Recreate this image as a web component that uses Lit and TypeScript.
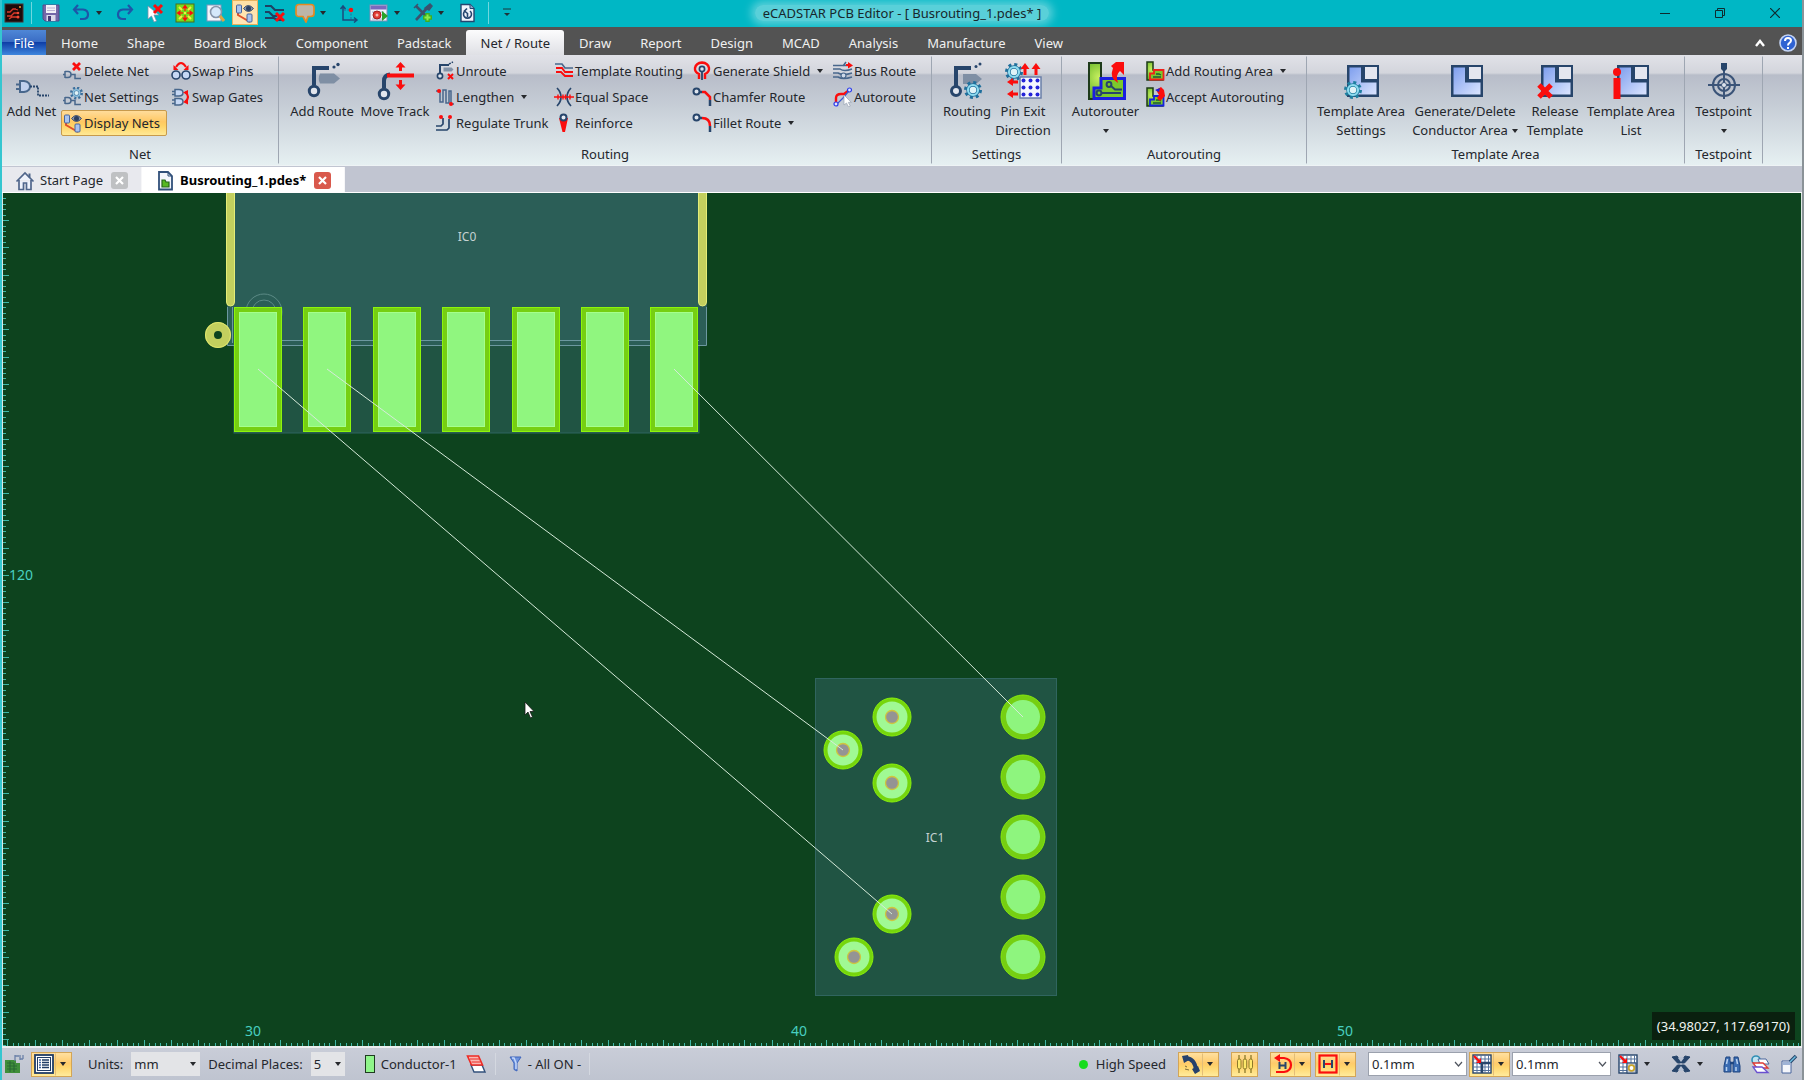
import { LitElement, html, svg, css, nothing, TemplateResult } from "lit";
import { customElement } from "lit/decorators.js";
import { classMap } from "lit/directives/class-map.js";

const NAVY = "#27456b";
const RED = "#fb0d0d";

const gear = (cx: number, cy: number, r: number, stroke = "#1f6f9c", fill = "#8fdcf0") => svg`
  <circle cx=${cx} cy=${cy} r=${r} fill="none" stroke=${stroke} stroke-width="4" stroke-dasharray=${`${(r * 0.4).toFixed(2)} ${(r * 0.385).toFixed(2)}`}/>
  <circle cx=${cx} cy=${cy} r=${r * 0.72} fill="#dff3f8" stroke=${stroke} stroke-width=${r * 0.5}/>
  <circle cx=${cx} cy=${cy} r=${r * 0.72} fill="none" stroke=${fill} stroke-width=${r * 0.3}/>`;

const cross = (x: number, y: number, s: number, w: number) => svg`
  <path d=${`M${x} ${y}l${s} ${s}M${x + s} ${y}l${-s} ${s}`} stroke=${RED} stroke-width=${w} fill="none"/>`;

const netLine = svg`
  <path d="M2 10v7M2 10.500h3q3 0 3 3t-3 3H2M0 13.500h2M8 13.500h4v4h6" fill="none" stroke="#48678c" stroke-width="1.500"/>`;

const displayNets = svg`
  <path d="M3 9v3l12 7" fill="none" stroke="#e0502a" stroke-width="2"/>
  <rect x="1.500" y="2" width="5" height="8" rx="1" fill="#a9c3ee" stroke="#48659c"/>
  <rect x="12" y="11" width="5" height="8" rx="1" fill="#a9c3ee" stroke="#48659c"/>
  <path d="M8.500 5.500q4.500-6 10 0q-5 6-10 0z" fill="#8b97ab" stroke="#3d4e6b"/>
  <circle cx="13.500" cy="5.500" r="2.500" fill="#2c3f62"/>`;

const board = (stroke: string) => svg`
  <path d="M2 1h6v8h10v10H2z" fill="url(#boardFill)" stroke="#1d3b16" stroke-width="1.500"/>
  <path d="M5 18.500v-6h4V9h9.500v9.500z" fill="#7cc92c" stroke=${stroke} stroke-width="1.800"/>
  <path d="M8 16h8M11 13h3l2 1" stroke="#1d5a36" stroke-width="1.300" fill="none"/>`;

const template = svg`
  <rect x="6" y="4" width="32" height="32" fill=${NAVY}/>
  <path d="M8.500 6.500h11.500v15h15.500v12H8.500z" fill="url(#tplFill)"/>
  <rect x="24" y="6" width="12" height="12" fill="#e4e6ef"/>`;

const defs = svg`
  <defs>
    <linearGradient id="tplFill" x1="0" y1="0" x2="1" y2="1">
      <stop offset="0" stop-color="#7f9fee"/><stop offset="1" stop-color="#dbe5ff"/>
    </linearGradient>
    <radialGradient id="boardFill" cx=".3" cy=".4" r=".8">
      <stop offset="0" stop-color="#c9f060"/><stop offset="1" stop-color="#3d9d12"/>
    </radialGradient>
  </defs>`;

/* Glyphs drawn on a 20 by 20 grid. */
const SMALL: Record<string, TemplateResult> = {
  deleteNet: svg`${netLine}${cross(10, 2, 7, 2.8)}`,
  netSettings: svg`${netLine}${gear(13.500, 6, 4.500, "#3b6f9c", "#8fc4e0")}`,
  displayNets,
  swapPins: svg`
    <circle cx="5" cy="14" r="4" fill="#c6d8f4" stroke=${NAVY} stroke-width="1.600"/>
    <circle cx="15" cy="14" r="4" fill="#c6d8f4" stroke=${NAVY} stroke-width="1.600"/>
    <path d="M5 6q5-8 10 0" fill="none" stroke=${RED} stroke-width="2"/>
    <path d="M2.500 4v5h5zM17.500 4v5h-5z" fill=${RED}/>`,
  swapGates: svg`
    <path d="M4 2.500h4q4 0 4 3.200t-4 3.200H4zM4 11.500h4q4 0 4 3.200t-4 3.200H4zM1 4.500h3M1 7.500h3M1 13h3M1 16.500h3" fill="#c6d8f4" stroke="#48678c" stroke-width="1.500"/>
    <path d="M14 5q6 5 0 10" fill="none" stroke=${RED} stroke-width="2.200"/>
    <path d="M12 5.500l5-2.500v5zM12 15l5 2.500v-5z" fill=${RED}/>`,
  unroute: svg`
    <path d="M5 13V4h9" fill="none" stroke=${NAVY} stroke-width="2"/>
    <path d="M14 3l4-2" stroke=${NAVY} stroke-width="1.500" stroke-dasharray="2 1"/>
    <circle cx="5" cy="15" r="2.600" fill="#dfe5ee" stroke=${NAVY} stroke-width="1.600"/>
    <path d="M8.500 6.500h8l2 2-2 2h-8z" fill="#8393a8"/>${cross(13, 13, 5, 2)}`,
  lengthen: svg`
    <path d="M1 4h4v11h3V3h3v13h3V4h2v13h3" fill="none" stroke="#48678c" stroke-width="1.500"/>
    <circle cx="4" cy="4" r="2" fill=${RED}/><circle cx="16" cy="17" r="2" fill=${RED}/>`,
  regulateTrunk: svg`
    <path d="M1 13h5l2-2V5M1 17h11l2-2V6" fill="none" stroke=${NAVY} stroke-width="1.700"/>
    <circle cx="6" cy="4" r="2" fill=${RED}/><circle cx="15" cy="4" r="2" fill=${RED}/>`,
  templateRouting: svg`
    <path d="M1 3h7l3 4h8" fill="none" stroke="#48678c" stroke-width="1.700"/>
    <path d="M2 7h6l3 4h8M2 11h5l4 4h8" fill="none" stroke=${RED} stroke-width="1.800"/>`,
  equalSpace: svg`
    <path d="M3 1q4 4 4 9t-4 9M17 1q-4 4-4 9t4 9" fill="none" stroke=${NAVY} stroke-width="1.700"/>
    <path d="M0 10h20M4 7.500v5M9 7.500v5M11.500 7.500v5M16 7.500v5" stroke=${RED} stroke-width="1.400"/>`,
  reinforce: svg`
    <path d="M5 5h9l-3 14H8.500z" fill=${RED}/>
    <circle cx="9.500" cy="4.500" r="3" fill="#e6ebf3" stroke=${NAVY} stroke-width="2"/>`,
  generateShield: svg`
    <path d="M7 18v-5q-4.500-2-4-6 1-5 7-5.500 6 .5 7 5.500.5 4-4 6v5" fill="none" stroke=${RED} stroke-width="2.400"/>
    <path d="M10 10v9" stroke=${NAVY} stroke-width="1.800"/>
    <circle cx="10" cy="8" r="2.600" fill="#dfe5ee" stroke=${NAVY} stroke-width="1.700"/>`,
  chamferRoute: svg`
    <circle cx="4.500" cy="4.500" r="3" fill="#dfe5ee" stroke=${NAVY} stroke-width="2"/>
    <path d="M7 5h3M18 13v6" stroke=${NAVY} stroke-width="2.500"/>
    <path d="M10 5h3l5 5v3" fill="none" stroke=${RED} stroke-width="2.500"/>`,
  filletRoute: svg`
    <circle cx="4.500" cy="4.500" r="3" fill="#dfe5ee" stroke=${NAVY} stroke-width="2"/>
    <path d="M7 5h3M18 13v6" stroke=${NAVY} stroke-width="2.500"/>
    <path d="M10 5q8 0 8 8" fill="none" stroke=${RED} stroke-width="2.500"/>`,
  busRoute: svg`
    <path d="M0 4.500h18M0 8h7q4 3 12 0M0 12h5q5 3 14 0M0 16h5q5 3 14 0M10 5l3-4" fill="none" stroke="#48678c" stroke-width="1.500"/>
    <path d="M13 4h3" stroke=${RED} stroke-width="2"/><path d="M15 1l5 3.500-5 3z" fill=${RED}/>
    <circle cx="10.500" cy="14.500" r="2.500" fill="#cfd9e8" stroke="#48678c" stroke-width="1.200"/>`,
  autoroute: svg`
    <path d="M3 16v-5q0-4 5-4h3l4-3" fill="none" stroke=${RED} stroke-width="2.400"/>
    <path d="M4 17l6-6 5-6" fill="none" stroke="#3a5bd0" stroke-width="1.200"/>
    <circle cx="16.500" cy="3" r="2" fill="#dfe5ff" stroke="#2b3bea" stroke-width="1.200"/>
    <circle cx="3" cy="17" r="2" fill="#dfe5ff" stroke="#2b3bea" stroke-width="1.200"/>
    <path d="M11 8v10l2.500-2 2 4 1.800-1-2-3.600h3z" fill="#fff" stroke="#9aa3b5" stroke-width=".7"/>`,
  addRoutingArea: svg`${defs}${board("#f0201a")}`,
  acceptAutorouting: svg`${defs}${board("#1522e0")}<path d="M11 3l5-3 3 3 1 6-5 5-3-3 2-3z" fill=${RED}/><path d="M10 3l5-2-1 4z" fill="#1522e0"/>`,

  appLogo: svg`
    <rect x="1" y="1" width="18" height="18" fill="#1c0b0a" stroke="#493230"/>
    <path d="M3 13h4l3-3h5M3 9h3l3-3h3M5 16l3-2h6M11 6l3 1" fill="none" stroke="#d8392a" stroke-width="1.300"/>
    <circle cx="14" cy="14" r="1.500" fill="#f04a35"/><circle cx="14" cy="10" r="1.300" fill="#f04a35"/><circle cx="16" cy="4" r="1" fill="#f4a035"/>`,
  save: svg`
    <path d="M2 2h16v16H4l-2-2z" fill="#7467a8" stroke="#574a8a"/>
    <rect x="5" y="2" width="10" height="8" fill="#f2f1f7"/><path d="M6 5h8M6 7.500h8" stroke="#bbb4d4"/>
    <rect x="5.500" y="12" width="9" height="6" fill="#dcd9ea"/><rect x="7" y="13" width="3" height="5" fill="#463a78"/>`,
  undo: svg`<path d="M7 2L3 6.500 7 11M3 6.500h9q5 .5 5 5t-5 4.500H9" fill="none" stroke="#1d56a8" stroke-width="2.200"/>`,
  redo: svg`<path d="M13 2l4 4.500-4 4.500M17 6.500H8q-5 .5-5 5T8 16h3" fill="none" stroke="#1d56a8" stroke-width="2.200"/>`,
  cursorX: svg`<path d="M3 3v13l3.500-3 2.500 6 2.500-1-2.500-6h5z" fill="#fff" stroke="#7d8fa8" stroke-width=".8"/>${cross(9, 2, 8, 3)}`,
  fit: svg`
    <rect x="1" y="1" width="18" height="18" fill="#79dc1c" stroke="#4c6d1d"/>
    <path d="M10 1.500l3 4H7zM10 18.500l3-4H7zM1.500 10l4-3v6zM18.500 10l-4-3v6z" fill=${RED}/>
    <path d="M4 4l3 3M16 4l-3 3M4 16l3-3M16 16l-3-3" stroke="#f4ee3d" stroke-width="2"/>
    <path d="M10 5v3M10 12v3M5 10h3M12 10h3" stroke="#e83a0a" stroke-width="1.600"/>
    <rect x="9" y="9" width="2" height="2" fill="#f4ee3d"/>`,
  magnify: svg`
    <rect x="2" y="2" width="14" height="16" fill="#f2f5fa" stroke="#7d96bb"/>
    <circle cx="11" cy="9" r="5.500" fill="#d5e8fa" stroke="#8795aa" stroke-width="1.600"/>
    <path d="M15 13l4 5" stroke="#d9a545" stroke-width="3"/>`,
  routeX: svg`
    <path d="M0 3h6l4 4h9M0 9h4l4 4h4M0 15h9l3 2h7" fill="none" stroke="#1e4163" stroke-width="2.200"/>${cross(11, 10, 8, 3)}`,
  comment: svg`<path d="M4 1.500h12q3 0 3 3v6q0 3-3 3h-3l-2 5.500-3-5.500H4q-3 0-3-3v-6q0-3 3-3z" fill="#bdb5a8" stroke="#e58a22" stroke-width="1.700"/>`,
  axis: svg`
    <path d="M4 3v14h14M1.500 6L4 3l2.500 3M15 14.500l3 2.500-3 2.500" fill="none" stroke="#1c4a7c" stroke-width="1.500"/>
    <path d="M5 7h7v10" fill="none" stroke="#2f62a0" stroke-dasharray="2 1.500"/><circle cx="12" cy="7" r="2.200" fill=${RED}/>`,
  macro: svg`
    <rect x="1" y="2" width="17" height="16" fill="#f1f3fa" stroke="#7d8bb5"/><rect x="1.500" y="2.500" width="16" height="4" fill="#7b68bd"/>
    <path d="M3 9h12M3 16h12" stroke="#a7aecb"/><circle cx="8" cy="12" r="4" fill="#e23d35" stroke="#a51f1f"/><circle cx="8" cy="12" r="1.500" fill="#f7bbb5"/>
    <path d="M13 8l6 5-6 5z" fill="#2aa32a"/>`,
  tools: svg`
    <path d="M3 17L15 4M3 3l12 12" stroke="#3b526e" stroke-width="2.600"/>
    <path d="M12 5l5-4 2 2-3 4zM1 5l4-4" fill="#3b526e" stroke="#3b526e" stroke-width="1.500"/>
    <path d="M14.500 10v9M10 14.500h9" stroke="#3fae1f" stroke-width="4.500"/><path d="M14.500 11.500v6M11.500 14.500h6" stroke="#8bec4b" stroke-width="2"/>`,
  docRefresh: svg`
    <path d="M4 1.500h9l4 4v13H4z" fill="#eef3fb" stroke="#24456f" stroke-width="1.400"/><path d="M13 1.500v4h4" fill="#8fa8cc" stroke="#24456f"/>
    <path d="M8 8a4 4 0 1 0 5 0M10 5.500L7.500 8l3 2.500M10.500 10v4" fill="none" stroke="#24456f" stroke-width="1.600"/>`,

  house: svg`
    <path d="M1.500 10.500L10 2l8.500 8.500M4 9v9.500h4.500V12h3v6.500H16V9" fill="#eef2fb" stroke="#50668b" stroke-width="1.700"/><path d="M14.500 2.500v4" stroke="#50668b" stroke-width="2"/>`,
  docBoard: svg`
    <path d="M4 1h9l4 4v13.500H4z" fill="#f3f6fc" stroke="#31507a" stroke-width="1.800"/><path d="M13 1v4h4" fill="none" stroke="#31507a"/>
    <path d="M7 9h3l1 2h3v5H7z" fill="#57b822" stroke="#26661c" stroke-width="1.200"/>`,

  boardTag: svg`
    <path d="M1 6h11v3h4v10H1z" fill="#3f8e3a"/><path d="M3 9h7M3 12h10M3 15h10M6 7v11M10 9v9" stroke="#2a6a35" stroke-width="1.200"/>
    <path d="M11 1v6M11 2h4M16 1v5M16 5h3M19 1v4" stroke="#6b80a8" stroke-width="1.300"/>`,
  list: svg`
    <rect x="1" y="1" width="18" height="18" fill="#fff" stroke="#203c66" stroke-width="1.800"/>
    <rect x="3.500" y="3.500" width="13" height="13" fill="none" stroke="#203c66" stroke-width="1"/>
    <path d="M8 6h7M8 8.500h7M8 11h7M8 13.500h7" stroke="#203c66" stroke-width="1.400"/><path d="M5 6h2M5 8.500h2M5 11h2M5 13.500h2" stroke="#3c62a0" stroke-width="1.400"/>`,
  layerPair: svg`
    <path d="M5 11h11l3 7H8z" fill="#fff" stroke="#33517c" stroke-width="1.400"/>
    <path d="M1.500 2h11l4 9h-11z" fill="#f9b7b3" stroke="#ee2b25" stroke-width="1.600"/><path d="M4 5h9M5.500 8h9" stroke="#ee2b25"/>`,
  funnel: svg`<path d="M5 3h11l-4 6v8l-3-1.500V9z" fill="#6e93dc" stroke="#3d65bd"/><path d="M7 4h2l2 5v6" fill="none" stroke="#c5d8fa" stroke-width="1.500"/>`,
  handset: svg`<path d="M5 4q9 1 10 12" fill="none" stroke="#26416b" stroke-width="4"/>
    <path d="M1 2l6-1 1 5-5 3zM11 15l6-3 2 5-5 3z" fill="#26416b"/><path d="M4 12l2 1M4 15l4 1" stroke="#7c6a3a"/>`,
  capsules: svg`
    <path d="M4 1v18M10 1v18M16 1v18" stroke="#8d7a2b" stroke-width="1.300"/>
    <rect x="2.500" y="5" width="3.500" height="10" rx="1.700" fill="#ffe96b" stroke="#8d7a2b"/><rect x="8.200" y="5" width="3.500" height="10" rx="1.700" fill="#ffe96b" stroke="#8d7a2b"/><rect x="14" y="5" width="3.500" height="10" rx="1.700" fill="#ffe96b" stroke="#8d7a2b"/>`,
  loopH: svg`
    <path d="M4 4h7q7 1 7 7t-7 7H3" fill="none" stroke=${RED} stroke-width="2.200"/><path d="M7 0v8L1 4z" fill=${RED}/>
    <path d="M6.500 8v7M12.500 8v7M6.500 11.500h6" stroke="#27456b" stroke-width="2"/>`,
  boxH: svg`
    <rect x="1.500" y="1.500" width="17" height="17" fill="none" stroke=${RED} stroke-width="2.200"/>
    <path d="M6 6v8M14 6v8" stroke="#27456b" stroke-width="2"/><path d="M7 10h6" stroke=${RED} stroke-width="2"/>`,
  gridArrow: svg`
    <rect x="1" y="1" width="18" height="18" fill="#fff" stroke="#27456b" stroke-width="1.400"/>
    <path d="M1 5h18M1 9h18M1 13h18M1 16.500h18M5 1v18M9 1v18M13 1v18M16.500 1v18" stroke="#55729c"/><path d="M10 9v10M7 9h12" stroke="#27456b" stroke-width="2.400"/>
    <path d="M2 2l5 5" stroke=${RED} stroke-width="2.200"/><path d="M9 4v5H4z" fill=${RED}/>`,
  gridVia: svg`
    <rect x="1" y="1" width="18" height="18" fill="#fff" stroke="#27456b" stroke-width="1.400"/>
    <path d="M1 5h18M1 9h18M1 13h18M1 16.500h18M5 1v18M9 1v18M13 1v18M16.500 1v18" stroke="#55729c"/>
    <rect x="9" y="9" width="9" height="10" fill="#c3cad8" stroke="#27456b"/><circle cx="13.500" cy="14" r="2.800" fill="#fff" stroke="#c9a52b" stroke-width="1.800"/>
    <path d="M2 2l5 5" stroke=${RED} stroke-width="2.200"/><path d="M9 4v5H4z" fill=${RED}/>`,
  target: svg`
    <path d="M1 3l5-1 3.500 5v2h-3zM19 3l-5-1-3.500 5v2h3zM1 17l5 1 3.500-5v-2h-3zM19 17l-5 1-3.500-5v-2h3z" fill="#27456b" stroke="#27456b"/>
    <path d="M7 4q3-2 6 0l-3 4zM7 16q3 2 6 0l-3-4z" fill="#b9c3d4"/>`,
  binoculars: svg`
    <path d="M4 3h4v4l1 3v8H2v-6zM12 3h4l2 9v6h-7v-8l1-3z" fill="#3b6cb2" stroke="#1e4580"/>
    <path d="M8 9h4" stroke="#1e4580" stroke-width="2.500"/><path d="M4.500 13v4M14 13v4M5.500 5l-1 5M14.500 5l1 5" stroke="#b9d2f2" stroke-width="1.500"/>`,
  layers: svg`
    <circle cx="6" cy="6" r="4" fill="#bfe3f0" stroke="#2f8fb5" stroke-width="1.600"/>
    <path d="M8 5h8l3 5h-9z" fill="#fff" stroke="#48659c"/><path d="M3 9h10l5 5H7z" fill="#fff" stroke="#e03a35" stroke-width="1.300"/>
    <path d="M3 13h9l6 5.500H7z" fill="#fff" stroke="#6a50d0" stroke-width="1.300"/>`,
  brush: svg`
    <path d="M4 7h9v12H4z" fill="#f4f6fb" stroke="#48659c"/><path d="M5 8h7v3H5z" fill="#9fb3d6"/><path d="M12 8l6-6" stroke="#27456b" stroke-width="3.500"/><path d="M12 8l5.500-5.500" stroke="#6fc1e4" stroke-width="1.500"/>`,
};

/* Glyphs drawn on a 40 by 40 grid. */
const LARGE: Record<string, TemplateResult> = {
  addNet: svg`
    <path d="M8 20v11h4q6-1 6-5.500T12 20zM4 23.500h4M4 28h4" fill="#bfd0ee" stroke="#48678c" stroke-width="2"/>
    <path d="M18 25.500h8v9h11" fill="none" stroke="#27456b" stroke-width="1.800" stroke-dasharray="2 1"/>`,
  addRoute: svg`
    <path d="M12 24V7h15" fill="none" stroke=${NAVY} stroke-width="4"/>
    <circle cx="12" cy="30" r="4.700" fill="#e2e6ee" stroke=${NAVY} stroke-width="3"/>
    <circle cx="32" cy="6" r="1.600" fill=${NAVY}/><circle cx="36" cy="3.500" r="1.700" fill=${NAVY}/>
    <path d="M18 12.500h14l6 5-6 5H18q-2.500-5 0-10z" fill="#7f8fa4"/>`,
  moveTrack: svg`
    <path d="M9 27v-7q0-6 6-6.500" fill="none" stroke=${NAVY} stroke-width="4"/>
    <circle cx="9" cy="33" r="4.700" fill="#e2e6ee" stroke=${NAVY} stroke-width="3"/>
    <path d="M12 14.500h27" stroke=${RED} stroke-width="4"/>
    <path d="M25.500 1l5 5.500h-3.500V10h-3V6.500h-3.500zM25.500 29l5-5.500h-3.500V19h-3v4.500h-3.500z" fill=${RED}/>`,
  routing: svg`
    <path d="M9 25V7h15" fill="none" stroke=${NAVY} stroke-width="4"/>
    <circle cx="9" cy="30" r="4.500" fill="#e2e6ee" stroke=${NAVY} stroke-width="3"/>
    <circle cx="29" cy="5.500" r="1.500" fill=${NAVY}/><circle cx="33" cy="3" r="1.500" fill=${NAVY}/>
    <path d="M16 13h13l6 5-6 5H16z" fill="#7f8fa4"/>${gear(26, 29, 7)}`,
  pinExit: svg`
    ${gear(11, 11, 7)}
    <path d="M22 2l4.500 6h-3v6h-3V8h-3zM33 2l4.500 6h-3v6h-3V8h-3zM4 21l6-4v2.500h5v3h-5V25zM4 33l6-4v2.500h5v3h-5V37z" fill=${RED}/>
    <rect x="17" y="16" width="21" height="21" fill="#f4f6ff" stroke="#6a7fa8" stroke-width="1.500"/>
    ${[20.5, 27.5, 34.5].map((x) => [19.5, 26.5, 33.5].map((y) => svg`<circle cx=${x} cy=${y} r="2" fill="#2222d8"/>`))}`,
  autorouter: svg`${defs}
    <path d="M3 2h12v16h22v20H3z" fill="url(#boardFill)" stroke="#1e3a1a" stroke-width="2"/>
    <path d="M8 37.500V27h7v-9.500h23.500v20z" fill="#7cc92c" stroke="#1a1fe0" stroke-width="3"/>
    <circle cx="13" cy="32" r="2.400" fill="none" stroke=${NAVY} stroke-width="2"/><circle cx="23" cy="23.500" r="2.400" fill="none" stroke=${NAVY} stroke-width="2"/>
    <path d="M16 32h19M25 25l4 3.500h7" fill="none" stroke=${NAVY} stroke-width="2"/>
    <path d="M30 1h8v13l-4-4q-5 4-2 12-9-5-5-15l-2-2z" fill=${RED}/>`,
  templateSettings: svg`${defs}${template}${gear(12, 29, 7, "#1f7fa0")}`,
  template: svg`${defs}${template}`,
  templateRelease: svg`${defs}${template}${cross(4, 24, 12, 5)}`,
  templateList: svg`${defs}${template}<circle cx="6" cy="11" r="4" fill=${RED}/><rect x="2.500" y="17" width="7" height="21" fill=${RED}/>`,
  testpoint: svg`
    <path d="M17 2h6v6l-2 2v3h-2v-3l-2-2z" fill=${NAVY}/>
    <circle cx="20" cy="24" r="11" fill="none" stroke="#3b5478" stroke-width="2"/><circle cx="20" cy="24" r="6" fill="none" stroke="#3b5478" stroke-width="2"/>
    <path d="M20 10v28M4 24h32" stroke="#3b5478" stroke-width="2"/><circle cx="20" cy="24" r="2.500" fill="#dfe5ee" stroke="#3b5478"/>`,
};

const smallIcon = (name: string) => html`<svg class="icon" width="20" height="20" viewBox="0 0 20 20" aria-hidden="true">${SMALL[name]}</svg>`;
const largeIcon = (name: string) => html`<svg class="icon" width="40" height="40" viewBox="0 0 40 40" aria-hidden="true">${LARGE[name]}</svg>`;
const caret = html`<svg class="caret" width="6" height="4" viewBox="0 0 6 4" aria-hidden="true"><path d="M0 0h6L3 4z" fill="#26282c"/></svg>`;

const base = css`
  :host, * { box-sizing: border-box; }
  :host { font: 13px/19px "Noto Sans", "Open Sans", sans-serif; color: #24272d; }
  button, select { font: inherit; color: inherit; }
  button { border: 1px solid transparent; background: none; padding: 0; margin: 0; white-space: nowrap; }
  .icon, .caret { display: block; flex: none; }
`;

@customElement("title-bar")
class TitleBar extends LitElement {
  static styles = [base, css`
    :host { display: grid; grid-template-columns: 1fr auto 1fr; align-items: center; height: 27px; padding-bottom: 2px; background: #00b7c5; color: #17272c; }
    .quick { display: flex; align-items: center; }
    .tool { display: grid; place-items: center; width: 26px; height: 25px; margin-right: 4px; }
    .tool.drop { margin-right: 0; }
    .tool.on { border-color: #e8b35e; background: linear-gradient(#ffe0a6, #ffe7b8); }
    .more { display: grid; place-items: center; width: 10px; height: 25px; margin-right: 8px; }
    .logo { margin: 0 7px 0 2px; }
    .bar { width: 1px; height: 22px; background: #6fd7de; margin-right: 6px; }
    .bar.end { margin: 0 12px 0 4px; }
    .title { padding: 0 8px; border-radius: 8px; background: #ffffff59; box-shadow: 0 0 8px 4px #ffffff59; line-height: 16px; }
    .window { display: flex; justify-content: flex-end; }
    .window button { display: grid; place-items: center; width: 55px; height: 25px; }
  `];
  tool(icon: string, label: string, drop = false, on = false) {
    return html`<button class=${classMap({ tool: true, drop, on })} aria-label=${label}>${smallIcon(icon)}</button>
      ${drop ? html`<button class="more" aria-label="${label} options">${caret}</button>` : nothing}`;
  }
  render() {
    return html`
      <div class="quick">
        <div class="logo">${smallIcon("appLogo")}</div>
        <div class="bar"></div>
        ${this.tool("save", "Save")}
        ${this.tool("undo", "Undo", true)}
        ${this.tool("redo", "Redo")}
        ${this.tool("cursorX", "Clear selection")}
        ${this.tool("fit", "Fit view")}
        ${this.tool("magnify", "Zoom")}
        ${this.tool("displayNets", "Display nets", false, true)}
        ${this.tool("routeX", "Remove route")}
        ${this.tool("comment", "Comment", true)}
        ${this.tool("axis", "Origin")}
        ${this.tool("macro", "Macro", true)}
        ${this.tool("tools", "Tools", true)}
        ${this.tool("docRefresh", "Reload")}
        <div class="bar end"></div>
        <button class="more" aria-label="Customise toolbar">
          <svg class="icon" width="10" height="10" viewBox="0 0 10 10"><path d="M1 1h8" stroke="#1d3338"/><path d="M2 5h6L5 8z" fill="#1d3338"/></svg>
        </button>
      </div>
      <div class="title">eCADSTAR PCB Editor - [ Busrouting_1.pdes* ]</div>
      <div class="window">
        <button aria-label="Minimise"><svg width="10" height="10"><path d="M0 5.500h10" stroke="#0e2a2e"/></svg></button>
        <button aria-label="Restore"><svg width="10" height="10"><path d="M.5 2.500h7v7h-7zM2.500 2.500v-2h7v7h-2" fill="none" stroke="#0e2a2e"/></svg></button>
        <button aria-label="Close"><svg width="10" height="10"><path d="M0 0l10 10M10 0L0 10" stroke="#0e2a2e" stroke-width="1.200"/></svg></button>
      </div>`;
  }
}

@customElement("menu-bar")
class MenuBar extends LitElement {
  static styles = [base, css`
    :host { display: flex; align-items: flex-end; height: 28px; background: #535353; color: #f0f0f0; }
    button { height: 25px; padding: 2px 14px 0 15px; border: 0; }
    .file { width: 44px; padding: 2px 0 0; background: linear-gradient(#4f87d6, #3a6cc4 48%, #0f3fa8 50%, #3f86dd); color: #fff; }
    .on { color: #24272d; border-radius: 3px 3px 0 0; background: linear-gradient(#fcfcfd, #dfe0e5); }
    .spacer { flex: 1; }
    .help { padding: 0; width: 28px; display: grid; place-items: center; }
  `];
  render() {
    const tabs = ["Home", "Shape", "Board Block", "Component", "Padstack", "Net / Route", "Draw", "Report", "Design", "MCAD", "Analysis", "Manufacture", "View"];
    return html`
      <button class="file">File</button>
      ${tabs.map((t) => html`<button class=${classMap({ on: t === "Net / Route" })}>${t}</button>`)}
      <div class="spacer"></div>
      <button class="help" aria-label="Collapse ribbon"><svg width="10" height="8"><path d="M1 7l4-5 4 5" fill="none" stroke="#fff" stroke-width="2.400"/></svg></button>
      <button class="help" aria-label="Help">
        <svg width="20" height="20"><circle cx="10" cy="10" r="8" fill="#2f62d2" stroke="#c3d3f3" stroke-width="1.600"/>
          <path d="M7 8q0-3 3-3t3 2.500q0 1.500-1.500 2.300T10 12.500M10 14v2" fill="none" stroke="#fff" stroke-width="2"/></svg>
      </button>`;
  }
}

type Small = { icon: string; label: string; drop?: boolean; on?: boolean };
type Big = { icon: string; lines: string[]; drop?: boolean };
type Group = { id: string; caption: string; big: Big[]; columns: Small[][] };

const GROUPS: Group[] = [
  { id: "net", caption: "Net", big: [{ icon: "addNet", lines: ["Add Net"] }], columns: [
    [{ icon: "deleteNet", label: "Delete Net" }, { icon: "netSettings", label: "Net Settings" }, { icon: "displayNets", label: "Display Nets", on: true }],
    [{ icon: "swapPins", label: "Swap Pins" }, { icon: "swapGates", label: "Swap Gates" }]] },
  { id: "routing", caption: "Routing", big: [{ icon: "addRoute", lines: ["Add Route"] }, { icon: "moveTrack", lines: ["Move Track"] }], columns: [
    [{ icon: "unroute", label: "Unroute" }, { icon: "lengthen", label: "Lengthen", drop: true }, { icon: "regulateTrunk", label: "Regulate Trunk" }],
    [{ icon: "templateRouting", label: "Template Routing" }, { icon: "equalSpace", label: "Equal Space" }, { icon: "reinforce", label: "Reinforce" }],
    [{ icon: "generateShield", label: "Generate Shield", drop: true }, { icon: "chamferRoute", label: "Chamfer Route" }, { icon: "filletRoute", label: "Fillet Route", drop: true }],
    [{ icon: "busRoute", label: "Bus Route" }, { icon: "autoroute", label: "Autoroute" }]] },
  { id: "settings", caption: "Settings", big: [{ icon: "routing", lines: ["Routing"] }, { icon: "pinExit", lines: ["Pin Exit", "Direction"] }], columns: [] },
  { id: "autorouting", caption: "Autorouting", big: [{ icon: "autorouter", lines: ["Autorouter", ""], drop: true }], columns: [
    [{ icon: "addRoutingArea", label: "Add Routing Area", drop: true }, { icon: "acceptAutorouting", label: "Accept Autorouting" }]] },
  { id: "template", caption: "Template Area", big: [
    { icon: "templateSettings", lines: ["Template Area", "Settings"] }, { icon: "template", lines: ["Generate/Delete", "Conductor Area"], drop: true },
    { icon: "templateRelease", lines: ["Release", "Template"] }, { icon: "templateList", lines: ["Template Area", "List"] }], columns: [] },
  { id: "testpoint", caption: "Testpoint", big: [{ icon: "testpoint", lines: ["Testpoint", ""], drop: true }], columns: [] },
];

@customElement("ribbon-panel")
class RibbonPanel extends LitElement {
  static styles = [base, css`
    :host { display: flex; height: 111px; background: linear-gradient(#e1e2e8, #d3d5dc 18px, #b8bdc9 20px, #c6cdd6 50px, #e6f0f2); border-bottom: 1px solid #eef3f5; }
    .group { display: flex; flex-direction: column; padding: 3px 0 0; border-right: 1px solid; border-image: linear-gradient(transparent 2px, #9ea6b2 3px, #9ea6b2 107px, transparent 108px) 1; }
    .cells { display: grid; flex: 1; align-items: start; }
    .net { width: 277px; }
    .net .cells { grid-template-columns: 59px 108px 1fr; }
    .routing { width: 653px; }
    .routing .cells { grid-template-columns: 70px 76px 119px 138px 141px 1fr; padding-left: 8px; }
    .settings { width: 130px; }
    .settings .cells { grid-template-columns: 54px 58px; padding-left: 8px; }
    .autorouting { width: 245px; }
    .autorouting .cells { grid-template-columns: 75px 1fr; padding-left: 6px; }
    .template { width: 378px; }
    .template .cells { grid-template-columns: 92px 116px 64px 88px; padding-left: 8px; }
    .testpoint { width: 78px; }
    .caption { text-align: center; line-height: 22px; }
    .big { display: flex; flex-direction: column; align-items: center; padding-top: 2px; width: 100%; }
    .big .icon { margin-bottom: 1px; }
    .line { display: flex; justify-content: center; align-items: center; gap: 4px; height: 19px; }
    .small { display: flex; align-items: center; gap: 1px; height: 26px; padding: 0 6px 0 1px; }
    .small .caret { margin-left: 6px; }
    .on { border-color: #c79a4c; border-radius: 2px; background: linear-gradient(#ffdc9a, #ffc863 45%, #ffd265 60%, #ffe995); }
  `];
  render() {
    return GROUPS.map((g) => html`
      <section class="group ${g.id}" aria-label=${g.caption}>
        <div class="cells">
          ${g.big.map((b) => html`<button class="big">${largeIcon(b.icon)}
            ${b.lines.map((l, i) => html`<span class="line">${l}${b.drop && i === b.lines.length - 1 ? caret : nothing}</span>`)}</button>`)}
          ${g.columns.map((c) => html`<div>${c.map((s) => html`
            <button class=${classMap({ small: true, on: !!s.on })}>${smallIcon(s.icon)}<span>${s.label}</span>${s.drop ? caret : nothing}</button>`)}</div>`)}
        </div>
        <div class="caption">${g.caption}</div>
      </section>`);
  }
}

@customElement("document-tabs")
class DocumentTabs extends LitElement {
  static styles = [base, css`
    :host { display: flex; align-items: flex-end; height: 27px; background: #c1c5d1; border-bottom: 1px solid #fff; }
    .tab { display: flex; align-items: center; height: 25px; background: #e8e9ee; padding: 2px 13px 0; border-right: 1px solid #f6f6f8; }
    .tab.on { background: #fff; color: #000; font-weight: 700; }
    .name { padding: 0 7px 0 4px; height: 23px; font-weight: inherit; }
    .close { display: grid; place-items: center; width: 17px; height: 17px; border-radius: 3px; background: #bfc1c3; }
    .on .close { background: #d9594c; }
  `];
  tab(icon: string, label: string, on: boolean) {
    return html`<div class=${classMap({ tab: true, on })}>${smallIcon(icon)}<button class="name">${label}</button>
      <button class="close" aria-label="Close ${label}"><svg width="9" height="9"><path d="M1 1l7 7M8 1L1 8" stroke="#fff" stroke-width="2.200"/></svg></button></div>`;
  }
  render() {
    return html`${this.tab("house", "Start Page", false)}${this.tab("docBoard", "Busrouting_1.pdes*", true)}`;
  }
}

/* Ruler scale: 54.6 px for each millimetre, ten minor ticks to the millimetre. */
const PX_PER_MM = 54.6;
const STEP = PX_PER_MM / 10;
const X_OF_30 = 250;
const Y_OF_120 = 382;

const ticks = (origin: number, length: number, draw: (p: number, major: boolean) => string) => {
  let d = "";
  for (let i = Math.ceil(-origin / STEP); origin + i * STEP < length; i++) d += draw(Math.round(origin + i * STEP), i % 5 === 0);
  return d;
};

@customElement("board-canvas")
class BoardCanvas extends LitElement {
  static styles = [base, css`
    :host { display: block; position: relative; flex: 1; min-height: 0; overflow: hidden; background: #0d431e; border-left: 1px solid #dfe9e4; border-right: 1px solid #dfe9e4; }
    .board { display: block; width: 100%; height: 100%; }
    .ruler-x { position: absolute; left: 0; bottom: 0; width: 100%; height: 28px; }
    .position { position: absolute; right: 6px; bottom: 6px; padding: 0 5px; line-height: 28px; background: #0a200f; color: #f0f4f0; }
    .ref { font-size: 12px; fill: #c4d2d2; text-anchor: middle; }
    .mark { font-size: 14px; fill: #48cfc0; }
    .mid { text-anchor: middle; }
  `];
  render() {
    const pads = [0, 1, 2, 3, 4, 5, 6].map((i) => Math.round(231 + i * 69.4));
    const vias = [[889, 524], [840, 557], [889, 590], [889, 721], [851, 764]];
    const lands = [524, 584, 644, 704, 764];
    return html`
      <svg class="board" role="img" aria-label="Board layout">
        <rect x="231" y="-2" width="465" height="242" fill="#205443" stroke="#2f6561"/>
        <rect x="224" y="-2" width="480" height="154" fill="#2b5e57"/>
        <path d="M224.500 114v38.500h479V114M231 147.500h465M229.500 114v36" fill="none" stroke="#6c98a0"/>
        <circle cx="261" cy="119" r="18" fill="none" stroke="#5b8a85"/><circle cx="261" cy="119" r="12" fill="none" stroke="#5b8a85"/>
        <rect x="223.500" y="-10" width="8" height="123" rx="4" fill="#c3cf5e" stroke="#e4ec78"/>
        <rect x="695.500" y="-10" width="8" height="123" rx="4" fill="#c3cf5e" stroke="#e4ec78"/>
        <circle cx="215" cy="142" r="8.500" fill="none" stroke="#c3cf5e" stroke-width="9"/><circle cx="215" cy="142" r="12.500" fill="none" stroke="#e0e66c"/>
        ${pads.map((x) => svg`<rect x=${x + 0.5} y="114.500" width="47" height="124" fill="#76cf12" stroke="#8df50a"/>
          <rect x=${x + 5.5} y="119.500" width="37" height="114" fill="#90f67f" stroke="#a5ff8c"/>`)}
        <text class="ref" x="464" y="48">IC0</text>
        <rect x="812.500" y="485.500" width="241" height="317" fill="#205443" stroke="#30655f"/>
        ${lands.map((y) => svg`<circle cx="1020" cy=${y} r="22" fill="#76cf12" stroke="#86e80c"/><circle cx="1020" cy=${y} r="17" fill="#8ef57e"/>`)}
        ${vias.map(([x, y]) => svg`<circle cx=${x} cy=${y} r="19" fill="#76d60c" stroke="#8af20a"/><circle cx=${x} cy=${y} r="15.500" fill="#a0f994"/>
          <circle cx=${x} cy=${y} r="6.500" fill="#949494" stroke="#cfc53d" stroke-width="1.300"/>`)}
        <text class="ref" x="932" y="649">IC1</text>
        <path d="M255 176L889 721M324 176L840 557M671 176l349 348" fill="none" stroke="#d5ead9" stroke-width="1"/>
        <path d="M522 509v13l3-3 2.500 6 2-1-2.500-5.500h4z" fill="#fff" stroke="#1b1b1b" stroke-width=".8"/>
        <path d=${ticks(Y_OF_120, 860, (p, m) => `M0 ${p}.5h${m ? 6 : 3}`)} stroke="#3fb8a8"/>
        <text class="mark" x="6" y="387">120</text>
      </svg>
      <svg class="ruler-x" aria-hidden="true">
        <path d=${ticks(X_OF_30, 4000, (p, m) => `M${p}.5 28v${m ? -6 : -3}`)} stroke="#3fb8a8"/>
        ${[30, 40, 50].map((v, i) => svg`<text class="mark mid" x=${X_OF_30 + i * PX_PER_MM * 10} y="18">${v}</text>`)}
      </svg>
      <output class="position">(34.98027, 117.69170)</output>`;
  }
}

@customElement("status-bar")
class StatusBar extends LitElement {
  static styles = [base, css`
    :host { display: flex; align-items: center; height: 34px; padding: 0 3px 0 1px; background: linear-gradient(#c9cdd8, #bfc4d0); border-top: 2px solid #eceef0; }
    .spacer { flex: 1; }
    .plain { display: grid; place-items: center; width: 22px; height: 24px; }
    .split { display: flex; height: 25px; border: 1px solid #d3a556; background: linear-gradient(#ffe0a0, #ffcb6b 45%, #ffd56c 60%, #ffeb9c); }
    .split.off { border-color: transparent; background: none; }
    .split button { display: grid; place-items: center; width: 23px; }
    .split .arrow { width: 16px; border-left-color: #e3bd78; }
    .split.off .arrow { border-left-color: transparent; }
    .split.lone button { width: 25px; }
    .field { display: grid; align-items: center; }
    .field select, .field .caret, .field .chevron { grid-area: 1 / 1; }
    .field .caret, .field .chevron { justify-self: end; margin-right: 4px; pointer-events: none; }
    select { appearance: none; height: 24px; padding: 0 0 0 3px; border: 0; border-radius: 0; background: #e3e4e7; }
    .wide select { width: 99px; border: 1px solid #9ba1ad; background: #fff; }
    .units { width: 69px; }
    .places { width: 34px; }
    .bar { width: 1px; height: 22px; background: #d4d8e0; }
    .swatch { width: 10px; height: 18px; border: 1px solid #1f3a20; background: #8ff58a; }
    .dot { width: 9px; height: 9px; border-radius: 50%; background: #17dc1d; }
    .left, .right { display: flex; align-items: center; }
    .g2 { margin-left: 2px; } .g4 { margin-left: 4px; } .g6 { margin-left: 6px; } .g8 { margin-left: 8px; } .g12 { margin-left: 12px; } .g16 { margin-left: 16px; } .g20 { margin-left: 20px; }
  `];
  split(icon: string, label: string, gap: string, off = false) {
    return html`<div class=${`split ${gap} ${off ? "off" : ""}`}><button aria-label=${label}>${smallIcon(icon)}</button><button class="arrow" aria-label="${label} options">${caret}</button></div>`;
  }
  wide(label: string, gap: string) {
    return html`<div class="field wide ${gap}"><select aria-label=${label}><option>0.1mm</option></select>
      <svg class="chevron" width="9" height="6"><path d="M1 1l3.500 4L8 1" fill="none" stroke="#50555f" stroke-width="1.200"/></svg></div>`;
  }
  render() {
    return html`
      <div class="left">
        <button class="plain" aria-label="Board information">${smallIcon("boardTag")}</button>
        ${this.split("list", "Panels", "g6")}
        <label class="g16" for="units">Units:</label>
        <div class="field g8"><select class="units" id="units"><option>mm</option></select>${caret}</div>
        <label class="g8" for="places">Decimal Places:</label>
        <div class="field g8"><select class="places" id="places"><option>5</option></select>${caret}</div>
        <div class="swatch g20"></div><span class="g6">Conductor-1</span>
        <button class="plain g8" aria-label="Layer pair">${smallIcon("layerPair")}</button>
        <div class="bar g8"></div>
        <button class="plain g8" aria-label="Filter">${smallIcon("funnel")}</button><span class="g2">- All ON -</span>
        <div class="bar g8"></div>
      </div>
      <div class="spacer"></div>
      <div class="right">
        <div class="dot"></div><span class="g8">High Speed</span>
        ${this.split("handset", "Online check", "g12")}
        <div class="split lone g12"><button aria-label="Track tuning">${smallIcon("capsules")}</button></div>
        ${this.split("loopH", "Loop removal", "g12")}
        ${this.split("boxH", "Clearance", "g4")}
        ${this.wide("Routing grid", "g12")}
        ${this.split("gridArrow", "Grid snap", "g2")}
        ${this.wide("Via grid", "g2")}
        ${this.split("gridVia", "Via snap", "g4", true)}
        ${this.split("target", "Snap target", "g12", true)}
        <button class="plain g12" aria-label="Find">${smallIcon("binoculars")}</button>
        <button class="plain g6" aria-label="Layer display">${smallIcon("layers")}</button>
        <button class="plain g6" aria-label="Highlight">${smallIcon("brush")}</button>
      </div>`;
  }
}

@customElement("app-root")
class AppRoot extends LitElement {
  static styles = css`
    :host { display: flex; flex-direction: column; height: 100vh; overflow: hidden; box-sizing: border-box; border-left: 2px solid #35c6d0; border-right: 2px solid #8b9398; background: #c1c5d1; }
  `;
  render() {
    return html`<title-bar></title-bar><menu-bar></menu-bar><ribbon-panel></ribbon-panel><document-tabs></document-tabs><board-canvas></board-canvas><status-bar></status-bar>`;
  }
}
